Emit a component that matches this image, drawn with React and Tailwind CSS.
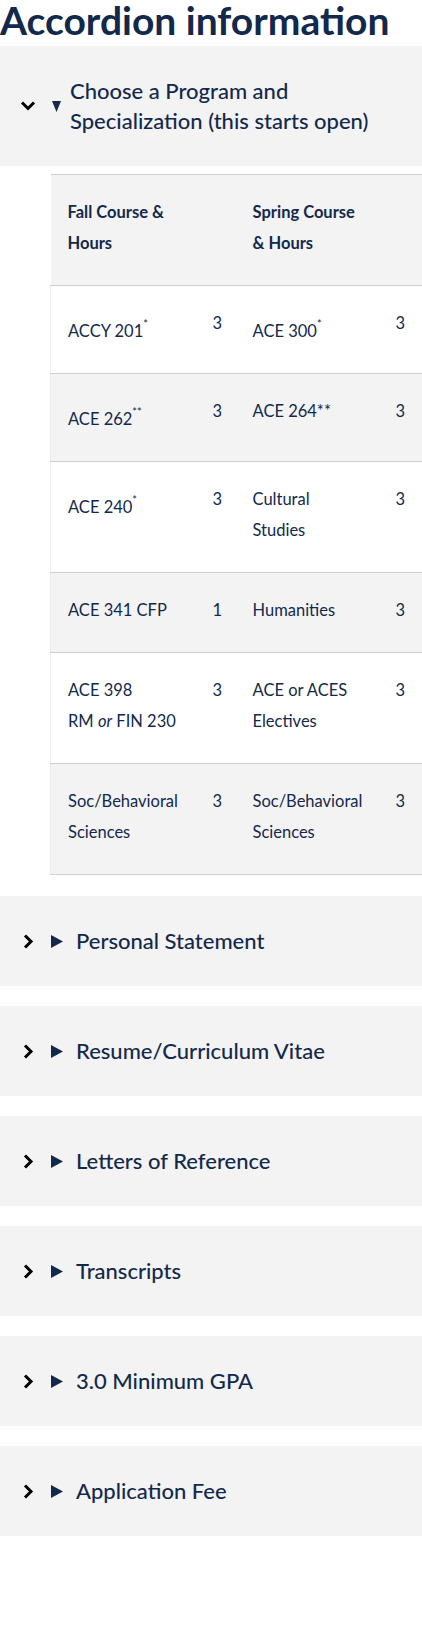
import React from 'react';

const navy = 'text-[#13294b]';

function Sup({ children }) {
  return <sup className="static align-[9px] text-[11px] leading-[31px]">{children}</sup>;
}

function ChevronRight() {
  return (
    <svg width="11" height="15" viewBox="0 0 11 15" className="shrink-0 ml-[23px]">
      <polyline points="2,1.5 8,7.5 2,13.5" fill="none" stroke="#000" strokeWidth="3" />
    </svg>
  );
}

function ChevronDown() {
  return (
    <svg width="16" height="10" viewBox="0 0 16 10" className="shrink-0 ml-[20px]">
      <polyline points="2,1.5 8,7.5 14,1.5" fill="none" stroke="#000" strokeWidth="3" />
    </svg>
  );
}

const rows = [
  { fall: <>ACCY 201<Sup>*</Sup></>, fh: '3', spring: <>ACE 300<Sup>*</Sup></>, sh: '3' },
  { fall: <>ACE 262<Sup>**</Sup></>, fh: '3', spring: 'ACE 264**', sh: '3' },
  { fall: <>ACE 240<Sup>*</Sup></>, fh: '3', spring: <>Cultural<br />Studies</>, sh: '3' },
  { fall: 'ACE 341 CFP', fh: '1', spring: 'Humanities', sh: '3' },
  { fall: <>ACE 398<br />RM <em>or</em> FIN 230</>, fh: '3', spring: <>ACE or ACES<br />Electives</>, sh: '3' },
  { fall: <>Soc/Behavioral<br />Sciences</>, fh: '3', spring: <>Soc/Behavioral<br />Sciences</>, sh: '3' },
];

const closed = [
  'Personal Statement',
  'Resume/Curriculum Vitae',
  'Letters of Reference',
  'Transcripts',
  '3.0 Minimum GPA',
  'Application Fee',
];

function CourseTable() {
  const td = 'align-top pt-[22px] pb-[26px] pl-[17px] pr-0 text-[16.5px] leading-[31px]';
  return (
    <table className={`ml-[50px] mt-[8px] w-[372px] table-fixed border-collapse ${navy}`}>
      <colgroup>
        <col className="w-[145px]" />
        <col className="w-[40px]" />
        <col className="w-[143px]" />
        <col className="w-[44px]" />
      </colgroup>
      <thead>
        <tr className="bg-[#f3f3f3] border-t border-b border-[#cfcfcf]">
          <th colSpan={2} className={`${td} text-left font-bold`}>Fall Course &amp;<br />Hours</th>
          <th colSpan={2} className={`${td} text-left font-bold`}>Spring Course<br />&amp; Hours</th>
        </tr>
      </thead>
      <tbody>
        {rows.map((r, i) => (
          <tr
            key={i}
            className={`border-b border-[#cfcfcf] border-l border-l-[#ececec] ${i % 2 === 1 ? 'bg-[#f3f3f3]' : 'bg-white'}`}
          >
            <td className={td}>{r.fall}</td>
            <td className={td}>{r.fh}</td>
            <td className={td}>{r.spring}</td>
            <td className={td}>{r.sh}</td>
          </tr>
        ))}
      </tbody>
    </table>
  );
}

export default function App() {
  return (
    <div className={`w-[422px] bg-white pb-[96px] font-['Lato',sans-serif] ${navy}`}>
      <h1 className="text-[39px] font-bold leading-[40px] mb-[6px] whitespace-nowrap">Accordion information</h1>

      <div>
        <div className="flex items-center bg-[#f3f3f3] py-[30px]">
          <ChevronDown />
          <svg width="9" height="11" viewBox="0 0 9 11" className="shrink-0 ml-[16px]">
            <polygon points="0,0 9,0 4.5,11" fill="#13294b" />
          </svg>
          <span className="ml-[9px] text-[22px] font-medium leading-[30px]">
            Choose a Program and<br />Specialization (this starts open)
          </span>
        </div>
        <CourseTable />
      </div>

      <div className="mt-[21px] flex flex-col gap-[20px]">
        {closed.map((t) => (
          <div key={t} className="flex items-center bg-[#f3f3f3] py-[30px]">
            <ChevronRight />
            <svg width="12" height="13" viewBox="0 0 12 13" className="shrink-0 ml-[17px]">
              <polygon points="0,0 12,6.5 0,13" fill="#13294b" />
            </svg>
            <span className="ml-[13px] text-[22px] font-medium leading-[30px] whitespace-nowrap">{t}</span>
          </div>
        ))}
      </div>
    </div>
  );
}
